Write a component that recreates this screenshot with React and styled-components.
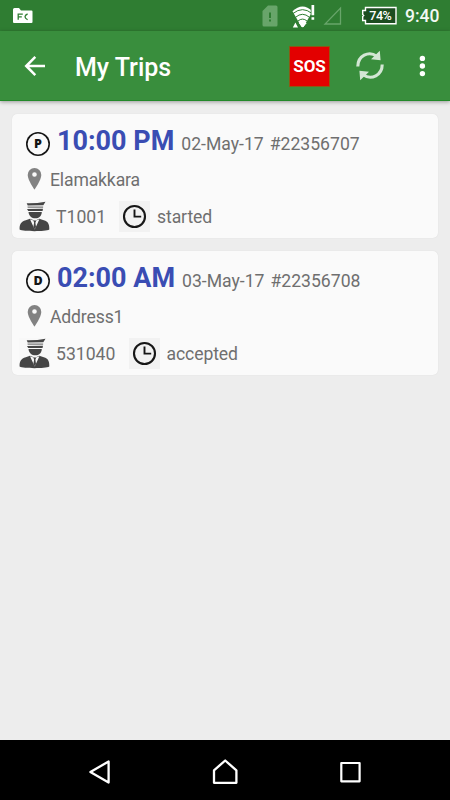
/* --- Packages --- */
import React from "react";
import styled, { createGlobalStyle } from "styled-components";

/* --- Data --- */
const colors = {
  statusBar: "#2f7d32",
  appBar: "#398e3d",
  page: "#ededed",
  card: "#fafafa",
  time: "#3a4db3",
  text: "#6f6f6f",
  alert: "#e30000"
};

const trips = [
  {
    type: "P",
    time: "10:00 PM",
    date: "02-May-17",
    number: "#22356707",
    place: "Elamakkara",
    driver: "T1001",
    driverWidth: 50,
    status: "started"
  },
  {
    type: "D",
    time: "02:00 AM",
    date: "03-May-17",
    number: "#22356708",
    place: "Address1",
    driver: "531040",
    driverWidth: 59.5,
    status: "accepted"
  }
];

/* --- Styles --- */
const GlobalStyle = createGlobalStyle`
  body {
    margin: 0;
    font-family: Roboto, "Liberation Sans", sans-serif;
  }

  svg {
    display: block;
    flex: none;
  }
`;

const Screen = styled.div`
  width: 450px;
  height: 800px;
  display: flex;
  flex-direction: column;
  overflow: hidden;
  background-color: ${colors.page};
`;

const StatusBar = styled.div`
  height: 31px;
  flex: none;
  display: flex;
  align-items: center;
  box-sizing: border-box;
  padding: 1px 10px 0 12px;
  background-color: ${colors.statusBar};
`;

const StatusIcons = styled.div`
  display: flex;
  align-items: center;
  margin-left: auto;
`;

const WifiSlot = styled.div`
  margin: 0 7px 0 14px;
`;

const BatterySlot = styled.div`
  margin-left: 18px;
`;

const Clock = styled.span`
  width: 35px;
  margin-left: 8px;
  font-size: 17.5px;
  font-weight: 500;
  line-height: 30px;
  white-space: nowrap;
  color: #f3f8f3;
`;

const AppBar = styled.header`
  height: 70px;
  flex: none;
  display: flex;
  align-items: center;
  box-sizing: border-box;
  padding: 1px 18px 0 23px;
  border-bottom: 1px solid #23892a;
  background-color: ${colors.appBar};
  box-shadow: 0 1px 4px rgba(0, 0, 0, 0.35);
`;

const Title = styled.h1`
  margin: 4px auto 0 28px;
  font-size: 25px;
  font-weight: 500;
  line-height: 30px;
  color: white;
`;

const SosButton = styled.button`
  width: 41px;
  height: 41px;
  margin-right: 25px;
  padding: 0;
  border: 1px solid #8a5a14;
  background-color: ${colors.alert};
  color: white;
  font-family: inherit;
  font-size: 17px;
  font-weight: 700;
  letter-spacing: -0.1px;
`;

const MoreSlot = styled.div`
  margin-left: 27px;
`;

const TripList = styled.main`
  flex: 1;
  display: flex;
  flex-direction: column;
  gap: 13px;
  padding: 13px 12px 0;
`;

const Card = styled.section`
  height: 124px;
  display: flex;
  flex-direction: column;
  box-sizing: border-box;
  padding: 10px 7px 6px;
  border-radius: 5px;
  background-color: ${colors.card};
  box-shadow: 0 0 1px rgba(0, 0, 0, 0.12);
  color: ${colors.text};
  font-size: 17.6px;
  line-height: 22px;
`;

const TimeRow = styled.div`
  height: 44px;
  display: flex;
  align-items: flex-start;
  padding-left: 7px;
`;

const TypeBadge = styled.span`
  width: 24px;
  height: 24px;
  flex: none;
  margin: 8px 7px 0 0;
  box-shadow: inset 0 0 0 1.6px #151515;
  border-radius: 50%;
  color: #151515;
  font-family: "Open Sans", "DejaVu Sans", sans-serif;
  font-size: 12.5px;
  font-weight: 800;
  line-height: 24px;
  text-align: center;
`;

const TimeLine = styled.div`
  display: flex;
  align-items: baseline;
  white-space: nowrap;
`;

const Time = styled.strong`
  margin-right: 7px;
  color: ${colors.time};
  font-size: 27px;
  font-weight: 700;
  line-height: 34px;
`;

const TripDate = styled.span`
  margin-right: 6px;
`;

const PlaceRow = styled.div`
  height: 33px;
  display: flex;
  align-items: flex-start;
  padding-left: 8px;
`;

const Place = styled.span`
  margin: 1px 0 0 8px;
  letter-spacing: -0.15px;
`;

const DetailRow = styled.div`
  height: 31px;
  display: flex;
  align-items: center;
`;

const IconTile = styled.span`
  width: 31px;
  height: 31px;
  flex: none;
  display: flex;
  align-items: center;
  justify-content: center;
  background-color: ${props => (props.$shaded ? "#f2f2f2" : "#f8f8f8")};
`;

const Driver = styled.span`
  width: ${props => props.$width}px;
  margin: 0 13px 0 6px;
`;

const Status = styled.span`
  margin-left: 7px;
  letter-spacing: -0.1px;
`;

const NavBar = styled.nav`
  height: 60px;
  flex: none;
  display: flex;
  align-items: center;
  justify-content: space-between;
  box-sizing: border-box;
  padding: 3px 87px 0 87px;
  background-color: black;
`;

/* --- Icons --- */
const FolderIcon = () => (
  <svg width="22" height="18" viewBox="0 0 22 18">
    <path d="M1 2.500Q1 1 2.500 1H7l2 2.500h10.500q1 0 1 1V15q0 1-1 1H2q-1 0-1-1z" fill="#fff" />
    <path
      d="M6.200 12.700V7.200h4.600M6.200 9.900h3.600M15.600 6.800q-5.200 2.700 0 5.900"
      fill="none"
      stroke={colors.statusBar}
      strokeWidth="1.300"
    />
  </svg>
);

const SimIcon = () => (
  <svg width="16" height="22" viewBox="0 0 16 22">
    <path d="M6 .5h8q1.500 0 1.500 1.500v18q0 1.500-1.500 1.500H2Q.5 21.500.5 20V6z" fill="#68a56a" />
    <path d="M8 7.500V13M8 14.500v2" stroke={colors.statusBar} strokeWidth="2" />
  </svg>
);

const WifiIcon = () => (
  <svg width="24" height="23" viewBox="0 0 24 23">
    <path d="M.5 6.200Q10.500-3.200 20.500 6.200L11.500 22h-2z" fill="#fff" />
    <g fill="none" stroke={colors.statusBar} strokeWidth="1">
      <path d="M1 8.500Q10.500 .8 20 8.500" />
      <path d="M3.500 12.300Q10.500 6.300 17.500 12.300" />
      <path d="M6 16Q10.500 12.200 15 16" />
    </g>
    <path d="M.8 22.500l2.600-5 2.600 5zM6.800 18h8L10.800 22.500z" fill="#fff" />
    <path d="M18.700 0h4.600v15h-4.600z" fill={colors.statusBar} />
    <path d="M19.500 0h2.700v10.300h-2.700zM19.500 12.200h2.700v2.600h-2.700z" fill="#fff" />
  </svg>
);

const SignalIcon = () => (
  <svg width="20" height="20" viewBox="0 0 20 20">
    <path d="M17.500 2v16H2z" fill="none" stroke="#68a56a" strokeWidth="1.300" />
  </svg>
);

const BatteryIcon = () => (
  <svg width="36" height="20" viewBox="0 0 36 20">
    <path
      d="M4.500 1.500H35v16.200H4.500v-3.200H1.700v-4l1-1-1-1v-4h2.800z"
      fill="#1c4d20"
      stroke="#fff"
      strokeWidth="1.400"
    />
    <text
      x="19.300"
      y="14.200"
      fill="#fff"
      fontFamily="Roboto, sans-serif"
      fontSize="12.600"
      fontWeight="500"
      letterSpacing="-0.500"
      textAnchor="middle"
    >
      74%
    </text>
  </svg>
);

const BackIcon = () => (
  <svg width="24" height="24" viewBox="0 0 24 24">
    <path
      d="M22 12H4M12.300 2.800L3.200 12l9.100 9.200"
      fill="none"
      stroke="#fff"
      strokeWidth="2.500"
    />
  </svg>
);

const RefreshIcon = () => (
  <svg width="30" height="32" viewBox="0 0 30 32">
    <g fill="none" stroke="#d3e6d4" strokeWidth="3.100">
      <path d="M2.800 16.500C2.800 6 13.500 .3 21.800 6.200" />
      <path d="M27.200 14.500C27.200 25 16.500 30.700 8.200 24.800" />
    </g>
    <path d="M24.800 .8l.8 9.400-9.600-1zM5.200 30.200l-.8-9.400 9.600 1z" fill="#d3e6d4" />
  </svg>
);

const MoreIcon = () => (
  <svg width="20" height="24" viewBox="0 0 20 24">
    <g fill="#fff">
      <circle cx="10.400" cy="4.400" r="2.700" />
      <circle cx="10.400" cy="12" r="2.700" />
      <circle cx="10.400" cy="19.600" r="2.700" />
    </g>
  </svg>
);

const PinIcon = () => (
  <svg width="15" height="22" viewBox="0 0 15 22">
    <path
      fillRule="evenodd"
      d="M7.500.1a6.800 6.800 0 0 1 6.800 6.800c0 5-6.800 14.600-6.800 14.600S.7 11.900.7 6.900A6.800 6.800 0 0 1 7.500.1zm0 4.100a2.300 2.300 0 1 0 0 4.600 2.300 2.300 0 0 0 0-4.600z"
      fill="#828282"
    />
  </svg>
);

const DriverIcon = () => (
  <svg width="31" height="31" viewBox="0 0 31 31">
    <g fill="#454545">
      <path d="M7.700 2.300Q17 2.600 26.500.8l-2.200 3.500-15.600.3z" />
      <path d="M8.500 5.400h15.600v1.400H8.700z" fill="#777" />
      <path d="M8 7.900l16-.2-.4 2.400H9.200z" />
      <path d="M9.500 11h13.300c-.2 4.300-3 6.300-6.500 6.300S9.900 15.200 9.500 11z" />
      <path d="M.6 28.500c-.2-5.200 1.300-8 6.200-9.300l4.200-1.400 5 1.900 4.300-1.900 4.500 1.400c4.500 1.200 5.700 4.100 5.500 9.300-4 2.200-25.700 2.200-29.700 0z" />
    </g>
    <path d="M11 18.300l4.700 10.200 4.700-10.200-4.700 1.700z" fill="#fafafa" />
    <path d="M14.500 19.800h2.600l-.7 2 .6 4.200-1.300 2.200-1.300-2.200.7-4.200z" fill="#454545" />
  </svg>
);

const ClockIcon = () => (
  <svg width="25" height="25" viewBox="0 0 25 25">
    <g fill="none" stroke="#161616" strokeWidth="2.100">
      <circle cx="12.500" cy="12.500" r="10.500" />
      <path d="M12.500 5.500v7.100h6.700" strokeWidth="1.900" />
    </g>
  </svg>
);

const NavBackIcon = () => (
  <svg width="26" height="26" viewBox="0 0 26 26">
    <path d="M21.600 2.500v21L3.400 13z" fill="none" stroke="#fff" strokeWidth="2.300" strokeLinejoin="round" />
  </svg>
);

const HomeIcon = () => (
  <svg width="28" height="28" viewBox="0 0 28 28">
    <path d="M14.200 2.500l11.200 9.800v12.500H3V12.300z" fill="none" stroke="#fff" strokeWidth="2.300" strokeLinejoin="round" />
  </svg>
);

const RecentIcon = () => (
  <svg width="26" height="26" viewBox="0 0 26 26">
    <rect x="4.300" y="4" width="18.300" height="18.300" fill="none" stroke="#fff" strokeWidth="2.200" strokeLinejoin="round" />
  </svg>
);

/* --- Components --- */
const TripCard = ({ trip }) => (
  <Card>
    <TimeRow>
      <TypeBadge>{trip.type}</TypeBadge>
      <TimeLine>
        <Time>{trip.time}</Time>
        <TripDate>{trip.date}</TripDate>
        <span>{trip.number}</span>
      </TimeLine>
    </TimeRow>
    <PlaceRow>
      <PinIcon />
      <Place>{trip.place}</Place>
    </PlaceRow>
    <DetailRow>
      <IconTile>
        <DriverIcon />
      </IconTile>
      <Driver $width={trip.driverWidth}>{trip.driver}</Driver>
      <IconTile $shaded>
        <ClockIcon />
      </IconTile>
      <Status>{trip.status}</Status>
    </DetailRow>
  </Card>
);

const App = () => (
  <Screen>
    <GlobalStyle />
    <StatusBar>
      <FolderIcon />
      <StatusIcons>
        <SimIcon />
        <WifiSlot>
          <WifiIcon />
        </WifiSlot>
        <SignalIcon />
        <BatterySlot>
          <BatteryIcon />
        </BatterySlot>
        <Clock>9:40</Clock>
      </StatusIcons>
    </StatusBar>
    <AppBar>
      <BackIcon />
      <Title>My Trips</Title>
      <SosButton>SOS</SosButton>
      <RefreshIcon />
      <MoreSlot>
        <MoreIcon />
      </MoreSlot>
    </AppBar>
    <TripList>
      {trips.map(trip => (
        <TripCard trip={trip} key={trip.number} />
      ))}
    </TripList>
    <NavBar>
      <NavBackIcon />
      <HomeIcon />
      <RecentIcon />
    </NavBar>
  </Screen>
);

export default App;
